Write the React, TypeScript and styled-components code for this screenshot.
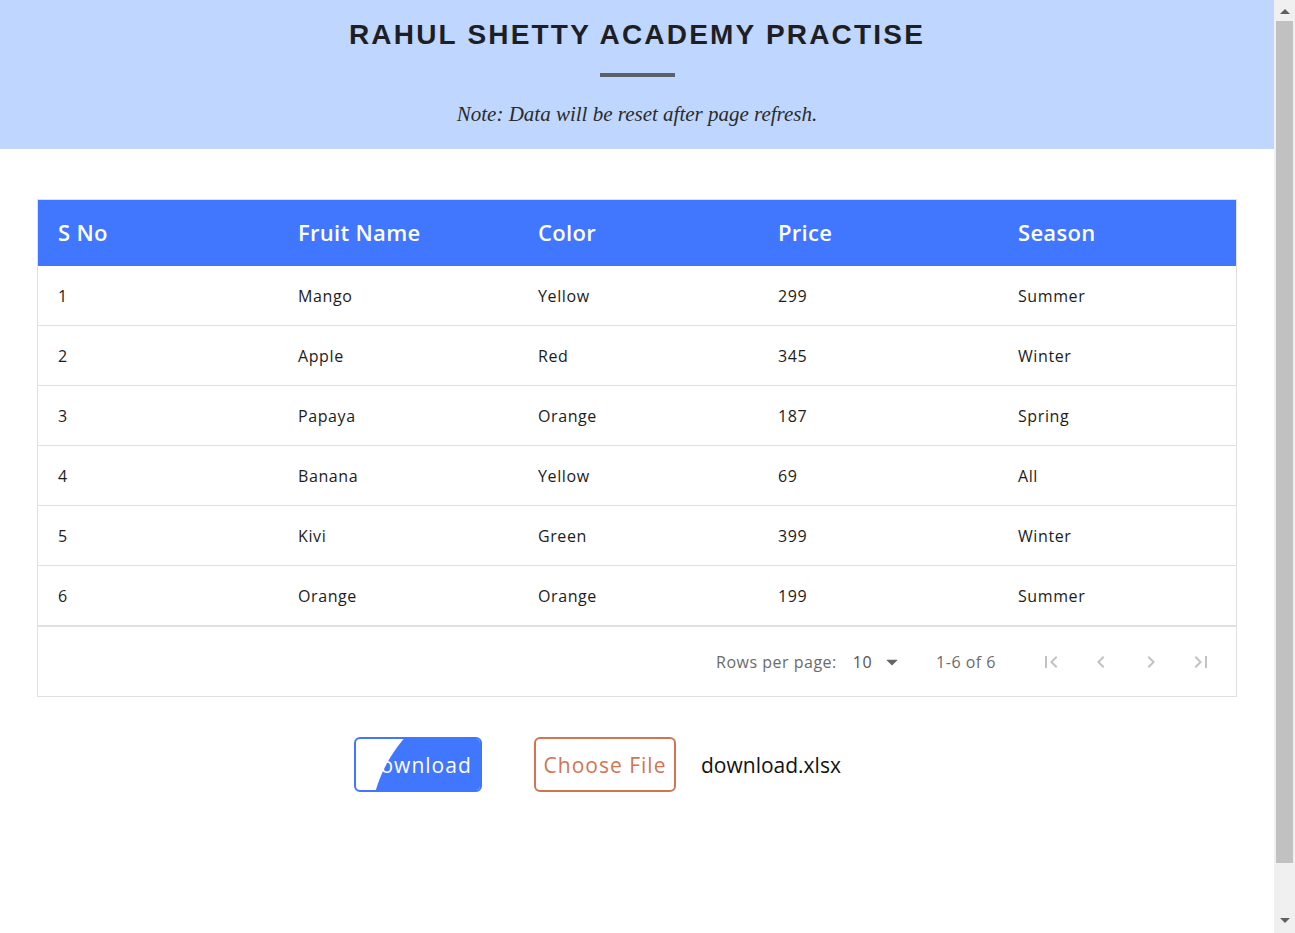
import styled, { createGlobalStyle } from "styled-components";
import { MdArrowDropDown, MdChevronLeft, MdChevronRight, MdFirstPage, MdLastPage } from "react-icons/md";

const GlobalStyle = createGlobalStyle`
  body {
    margin: 0;
    background: #ffffff;
  }
`;

const Page = styled.div`
  width: 1274px;
  font-family: "Open Sans", "Noto Sans", sans-serif;
`;

// 브라우저 스크롤바 (스크린샷에 보이는 것)
const ScrollTrack = styled.div`
  position: fixed;
  top: 0;
  right: 0;
  width: 21px;
  height: 100vh;
  background: #f0f0f0;
  display: flex;
  flex-direction: column;
  align-items: center;
  justify-content: space-between;
  padding: 9px 0 10px;
  box-sizing: border-box;
`;
const ScrollArrow = styled.div<{ $down?: boolean }>`
  width: 0;
  height: 0;
  border-left: 5px solid transparent;
  border-right: 5px solid transparent;
  border-bottom: ${(p) => (p.$down ? "none" : "5px solid #606060")};
  border-top: ${(p) => (p.$down ? "5px solid #606060" : "none")};
`;
const ScrollThumb = styled.div`
  width: 17px;
  margin-left: 2px;
  align-self: flex-start;
  height: 842px;
  margin-top: 7px;
  margin-bottom: auto;
  background: #c1c1c1;
`;

// 상단 파란 배너
const Banner = styled.header`
  background: #bfd7fe;
  padding: 19px 0 23px;
  display: flex;
  flex-direction: column;
  align-items: center;
`;
const Title = styled.h1`
  margin: 0;
  font-family: "Liberation Sans", Arial, sans-serif;
  font-size: 28px;
  line-height: 32px;
  font-weight: bold;
  letter-spacing: 2.2px;
  color: #1e1e24;
`;
const Bar = styled.div`
  width: 75px;
  height: 4px;
  margin-top: 22px;
  background: #5d5f6b;
`;
const Note = styled.p`
  margin: 25px 0 0;
  font-family: "Liberation Serif", "Times New Roman", serif;
  font-style: italic;
  font-size: 21px;
  line-height: 24px;
  color: #2b2b2b;
`;

const Main = styled.main`
  padding: 50px 37px 0;
`;

const TableBox = styled.div`
  width: 1198px;
  border: 1px solid #e0e0e0;
`;
const Grid = styled.div<{ $head?: boolean }>`
  display: grid;
  grid-template-columns: repeat(5, 240px);
  align-items: center;
  height: ${(p) => (p.$head ? "66px" : "60px")};
  box-sizing: border-box;
  padding-bottom: ${(p) => (p.$head ? "3px" : "0")};
  background: ${(p) => (p.$head ? "#4176ff" : "#ffffff")};
  color: ${(p) => (p.$head ? "#ffffff" : "#1c1c1c")};
  font-size: ${(p) => (p.$head ? "22px" : "16px")};
  font-weight: ${(p) => (p.$head ? 600 : 400)};
  letter-spacing: ${(p) => (p.$head ? "0.3px" : "0.6px")};
  border-bottom: ${(p) => (p.$head ? "none" : "1px solid #e0e0e0")};
  &:nth-of-type(7) {
    height: 61px;
    border-bottom-width: 2px;
  }
`;
const Cell = styled.div`
  padding-left: 20px;
`;

const Footer = styled.div`
  height: 69px;
  display: flex;
  justify-content: flex-end;
  align-items: center;
  padding-right: 10px;
  color: #6b6b6b;
  font-size: 16px;
  letter-spacing: 0.5px;
`;
const RowsSelect = styled.div`
  display: flex;
  align-items: center;
  margin-left: 16px;
  color: #555;
  gap: 6px;
  svg {
    color: #666;
  }
`;
const Range = styled.span`
  margin-left: 30px;
  margin-right: 30px;
`;
const PageButton = styled.button`
  width: 50px;
  height: 40px;
  border: none;
  background: none;
  padding: 0;
  display: flex;
  align-items: center;
  justify-content: center;
  color: #c2c2c2;
`;

const Actions = styled.div`
  display: flex;
  align-items: center;
  padding: 40px 0 0 317px;
`;
const DownloadButton = styled.button`
  position: relative;
  overflow: hidden;
  width: 128px;
  height: 55px;
  border: 2px solid #4176ff;
  border-radius: 6px;
  background: #ffffff;
  color: #ffffff;
  font-family: inherit;
  font-size: 21px;
  font-weight: 500;
  letter-spacing: 1px;
  span {
    position: relative;
  }
  /* 호버 애니메이션 도중 찍힌 파란 원 */
  &::before {
    content: "";
    position: absolute;
    left: 14px;
    top: -49px;
    width: 280px;
    height: 280px;
    border-radius: 50%;
    background: #4176ff;
  }
`;
const FileButton = styled.label`
  width: 142px;
  height: 55px;
  box-sizing: border-box;
  margin-left: 52px;
  border: 2px solid #d27450;
  border-radius: 6px;
  display: flex;
  align-items: center;
  justify-content: center;
  color: #d27450;
  font-size: 21px;
  font-weight: 500;
  letter-spacing: 1px;
`;
const FileName = styled.span`
  margin-left: 25px;
  font-size: 21px;
  color: #111;
`;

const fruits = [
  [1, "Mango", "Yellow", 299, "Summer"],
  [2, "Apple", "Red", 345, "Winter"],
  [3, "Papaya", "Orange", 187, "Spring"],
  [4, "Banana", "Yellow", 69, "All"],
  [5, "Kivi", "Green", 399, "Winter"],
  [6, "Orange", "Orange", 199, "Summer"],
];

export default () => {
  return (
    <Page>
      <GlobalStyle />
      <Banner>
        <Title>RAHUL SHETTY ACADEMY PRACTISE</Title>
        <Bar />
        <Note>Note: Data will be reset after page refresh.</Note>
      </Banner>
      <Main>
        <TableBox>
          <Grid $head>
            {["S No", "Fruit Name", "Color", "Price", "Season"].map((h) => (
              <Cell key={h}>{h}</Cell>
            ))}
          </Grid>
          {fruits.map((row) => (
            <Grid key={row[0]}>
              {row.map((v, i) => (
                <Cell key={i}>{v}</Cell>
              ))}
            </Grid>
          ))}
          <Footer>
            <span>Rows per page:</span>
            <RowsSelect>
              10 <MdArrowDropDown size={28} />
            </RowsSelect>
            <Range>1-6 of 6</Range>
            <PageButton>
              <MdFirstPage size={24} />
            </PageButton>
            <PageButton>
              <MdChevronLeft size={24} />
            </PageButton>
            <PageButton>
              <MdChevronRight size={24} />
            </PageButton>
            <PageButton>
              <MdLastPage size={24} />
            </PageButton>
          </Footer>
        </TableBox>
        <Actions>
          <DownloadButton>
            <span>Download</span>
          </DownloadButton>
          <FileButton>Choose File</FileButton>
          <FileName>download.xlsx</FileName>
        </Actions>
      </Main>
      <ScrollTrack>
        <ScrollArrow />
        <ScrollThumb />
        <ScrollArrow $down />
      </ScrollTrack>
    </Page>
  );
};
